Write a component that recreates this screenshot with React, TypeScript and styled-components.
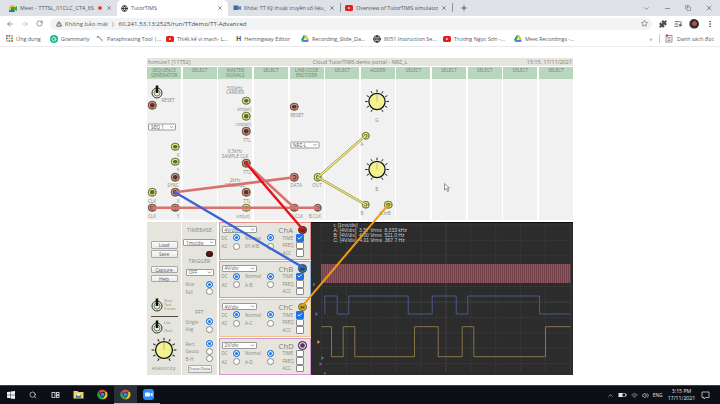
import React from "react";
import styled, { createGlobalStyle } from "styled-components";
import {
  ArrowLeft,
  ArrowRight,
  Check,
  ChevronDown,
  ChevronUp,
  Copy,
  Globe,
  ListMusic,
  Minus,
  MoreVertical,
  Plus,
  Puzzle,
  RotateCw,
  Search,
  Star,
  TriangleAlert,
  Volume2,
  Wifi,
  X,
} from "lucide-react";

const GlobalStyle = createGlobalStyle`
  html, body {
    margin: 0;
    width: 720px;
    height: 404px;
    overflow: hidden;
    background: #fff;
    font-family: "Open Sans", "Liberation Sans", sans-serif;
  }
  * { box-sizing: border-box; }
`;

// page position of the rack, the wires and the labels are read off the screenshot in page pixels
const RACK_X = 147;
const RACK_Y = 67;

const Screen = styled.div`
  width: 720px;
  height: 404px;
  display: flex;
  flex-direction: column;
`;

/* ---------- browser chrome ---------- */

const TabStrip = styled.div`
  height: 16px;
  background: #dee1e6;
  display: flex;
  align-items: stretch;
  color: #50545a;
`;

const Tab = styled.div<{ $w: number; $active?: boolean; $pad?: number }>`
  width: ${({ $w }) => $w}px;
  display: flex;
  align-items: center;
  gap: 3px;
  padding: 0 5px 0 ${({ $pad }) => $pad ?? 5}px;
  background: ${({ $active }) => ($active ? "#fff" : "transparent")};
  border-radius: 5px 5px 0 0;
  font-size: 5.4px;
  white-space: nowrap;
  svg { flex: none; }
`;

const TabTitle = styled.span<{ $track?: number }>`
  flex: 1;
  overflow: hidden;
  text-overflow: clip;
  letter-spacing: ${({ $track }) => $track ?? 0}px;
`;

const TabDivider = styled.div`
  width: 1px;
  height: 9px;
  margin: 3px 0;
  background: #8f9397;
`;

const NewTab = styled.div`
  width: 22px;
  display: flex;
  align-items: center;
  justify-content: center;
  color: #43474c;
`;

const WindowControls = styled.div`
  margin-left: auto;
  display: flex;
  align-items: center;
  gap: 14px;
  padding-right: 7px;
  color: #55595e;
`;

const Toolbar = styled.div`
  height: 15px;
  background: #fff;
  display: flex;
  align-items: center;
  padding: 0 6px 0 6px;
  color: #6a6e73;
`;

const NavIcons = styled.div`
  display: flex;
  align-items: center;
  gap: 7px;
  width: 44px;
`;

const Omnibox = styled.div`
  width: 604px;
  height: 12px;
  background: #f1f3f4;
  border-radius: 6px;
  display: flex;
  align-items: center;
  gap: 3px;
  padding: 0 4px 0 6px;
  font-size: 6.1px;
  color: #5f6368;
`;

const Url = styled.span`
  color: #4a4d51;
  margin-left: 1px;
`;

const ToolIcons = styled.div`
  display: flex;
  align-items: center;
  gap: 7px;
  margin-left: 7px;
  color: #45494e;
`;

const Avatar = styled.div`
  width: 10px;
  height: 10px;
  border-radius: 50%;
  background: radial-gradient(circle at 55% 45%, #a8553f 0 28%, #3b2b2c 30% 62%, #7d8a8e 64%);
`;

const BookmarkBar = styled.div`
  height: 16px;
  background: #fff;
  border-bottom: 1px solid #e8eaed;
  display: flex;
  align-items: center;
  padding-left: 6px;
  font-size: 5.4px;
  color: #55595e;
`;

const Bookmark = styled.div<{ $w: number }>`
  width: ${({ $w }) => $w}px;
  display: flex;
  align-items: center;
  gap: 3px;
  white-space: nowrap;
  overflow: hidden;
  svg { flex: none; }
`;

const BookmarkLetter = styled.b`
  font-size: 7px;
`;

const BookmarkEnd = styled.div`
  margin-left: auto;
  display: flex;
  align-items: center;
  gap: 4px;
  padding-right: 6px;
`;

const BarDivider = styled.div`
  width: 1px;
  height: 9px;
  background: #c8cacd;
  margin: 0 1px 0 3px;
`;

const OmniboxEnd = styled.span`
  margin-left: auto;
  display: flex;
`;

/* ---------- portal ---------- */

const Page = styled.div`
  flex: 1;
  background: #fff;
  padding: 11px 0 0 147px;
`;

const Portal = styled.div`
  position: relative;
  width: 426px;
  color: #8a8f8a;
`;

const TitleBar = styled.div`
  height: 8px;
  margin-bottom: 1px;
  padding: 0 1px;
  background: #e5e5dd;
  display: grid;
  grid-template-columns: 1fr auto 1fr;
  align-items: center;
  font-size: 5.2px;
  letter-spacing: 0.1px;
  color: #7b7e78;
`;

const TitleRight = styled.span`
  text-align: right;
`;

const Rack = styled.div`
  position: relative;
  height: 153px;
  display: grid;
  grid-template-columns: repeat(12, 1fr);
  column-gap: 1.6px;
  margin-bottom: 2px;
`;

const ModuleColumn = styled.div`
  display: flex;
  flex-direction: column;
  background: #f1f1f1;
`;

const ColumnHead = styled.div`
  height: 12px;
  padding-top: 1px;
  background: #b8d5bd;
  font-size: 4.6px;
  line-height: 5.2px;
  text-align: center;
  color: #73877a;
`;

const Node = styled.div<{ $x: number; $y: number }>`
  position: absolute;
  left: ${({ $x }) => $x - RACK_X}px;
  top: ${({ $y }) => $y - RACK_Y}px;
  transform: translate(-50%, -50%);
`;

const NodeLabel = styled(Node)`
  font-size: 4.6px;
  line-height: 4.8px;
  text-align: center;
  white-space: nowrap;
  color: #858985;
`;

const SOCKET = {
  brown: { rim: "#7d5a48", ring: "#c09a86", core: "#5e2f28" },
  green: { rim: "#76863a", ring: "#dfe79a", core: "#5f6b2a" },
  red: { rim: "#6e2b22", ring: "#a5342b", core: "#4f1510" },
  blue: { rim: "#2a4d74", ring: "#3f7ab2", core: "#1d3d5e" },
  orange: { rim: "#8b7628", ring: "#d9b53a", core: "#6e5a1a" },
  purple: { rim: "#4e2a5a", ring: "#e6d9ea", core: "#5c2f6b" },
};

const SocketDot = styled.span<{ $kind: keyof typeof SOCKET }>`
  display: block;
  flex: none;
  width: 8.5px;
  height: 8.5px;
  border-radius: 50%;
  background: ${({ $kind }) => SOCKET[$kind].core};
  border: 1.5px solid ${({ $kind }) => SOCKET[$kind].rim};
  box-shadow: inset 0 0 0 1.2px ${({ $kind }) => SOCKET[$kind].ring};
`;

const Dropdown = styled.div<{ $w: number; $h?: number }>`
  width: ${({ $w }) => $w}px;
  height: ${({ $h }) => $h ?? 7}px;
  background: #fff;
  border: 0.6px solid #9a9a9a;
  border-radius: 1px;
  display: flex;
  align-items: center;
  justify-content: space-between;
  padding: 0 1px 0 2px;
  font-size: 4.8px;
  color: #555;
  white-space: nowrap;
`;

/* ---------- console ---------- */

const Console = styled.div`
  height: 153px;
  display: flex;
`;

const SidePanel = styled.div`
  width: 34px;
  margin-right: 1px;
  background: #e5e5dd;
  padding-top: 19px;
  display: flex;
  flex-direction: column;
  align-items: center;
`;

const ActionGroup = styled.div`
  display: flex;
  flex-direction: column;
  gap: 1.5px;
  margin-bottom: 8px;
`;

const ActionButton = styled.div<{ $w?: number }>`
  width: ${({ $w }) => $w ?? 27}px;
  height: 7.5px;
  background: linear-gradient(#fafafa, #e9e9e9);
  border: 0.6px solid #a9a9a9;
  border-radius: 1px;
  font-size: 4.6px;
  line-height: 6.2px;
  text-align: center;
  color: #555;
`;

const ModeRow = styled.div<{ $mt: number }>`
  width: 100%;
  margin-top: ${({ $mt }) => $mt}px;
  display: flex;
  align-items: center;
  gap: 1px;
  padding-left: 4px;
`;

const ModeText = styled.div`
  font-size: 3.8px;
  line-height: 4px;
  color: #8a8a84;
`;

const Rule = styled.div`
  width: 27px;
  height: 1px;
  margin-top: 4px;
  background: #4c4c48;
`;

const KnobSlot = styled.div`
  margin-top: 3px;
  height: 26px;
`;

const KnobCaption = styled.div`
  margin-top: 0.5px;
  font-size: 5.4px;
  letter-spacing: 0.2px;
  color: #8d908a;
`;

const ControlPanel = styled.div`
  width: 35px;
  margin-right: 1.5px;
  background: #e5e5dd;
  padding: 5px 0 0;
  display: flex;
  flex-direction: column;
  align-items: center;
`;

const ControlTitle = styled.div<{ $mt: number }>`
  margin-top: ${({ $mt }) => $mt}px;
  height: 6px;
  font-size: 5.2px;
  line-height: 6px;
  letter-spacing: 0.1px;
  color: #85887f;
`;

const ControlDrop = styled.div<{ $mt: number }>`
  margin-top: ${({ $mt }) => $mt}px;
`;

const Led = styled.div`
  align-self: flex-end;
  width: 6.5px;
  height: 6.5px;
  margin: 4.7px 4.5px 0 0;
  border-radius: 50%;
  background: radial-gradient(circle at 50% 45%, #7a1c18, #2a0b0a 70%);
`;

const OptionGroup = styled.div<{ $mt: number }>`
  width: 100%;
  margin-top: ${({ $mt }) => $mt}px;
  padding: 0 4.5px 0 3.5px;
  display: flex;
  flex-direction: column;
  gap: 0.5px;
`;

const OptionRow = styled.div`
  height: 7.2px;
  display: flex;
  align-items: center;
  justify-content: space-between;
  font-size: 4.6px;
  color: #8a8d86;
`;

const TraceButton = styled(ActionButton)`
  margin-top: 2.5px;
  font-size: 4.2px;
`;

const Radio = styled.span<{ $on?: boolean }>`
  flex: none;
  width: 7px;
  height: 7px;
  border-radius: 50%;
  background: ${({ $on }) => ($on ? "#1a73e8" : "#fff")};
  border: 0.8px solid ${({ $on }) => ($on ? "#1a73e8" : "#8a8a8a")};
  box-shadow: ${({ $on }) => ($on ? "inset 0 0 0 1px #fff" : "none")};
`;

const Tick = styled.span<{ $on?: boolean }>`
  flex: none;
  width: 7.5px;
  height: 7.5px;
  border-radius: 1px;
  background: ${({ $on }) => ($on ? "#1a73e8" : "#fff")};
  border: 0.7px solid ${({ $on }) => ($on ? "#1a73e8" : "#8a8a8a")};
  display: flex;
  align-items: center;
  justify-content: center;
  color: #fff;
`;

const ChannelStack = styled.div`
  width: 92.5px;
  display: flex;
  flex-direction: column;
  gap: 1px;
`;

const ChannelCard = styled.div<{ $edge: string }>`
  flex: 1;
  background: #e5e5dd;
  border: 1px solid ${({ $edge }) => $edge};
  padding: 3px 6.5px 0 2px;
  display: flex;
  justify-content: space-between;
`;

const ChannelLeft = styled.div`
  display: flex;
  flex-direction: column;
  gap: 1px;
`;

const RadioRow = styled.div`
  display: grid;
  grid-template-columns: 11px 7.5px 27px 7.5px;
  height: 7.5px;
  align-items: center;
  font-size: 4.6px;
  color: #85887f;
  span:nth-child(3) { padding-left: 5px; white-space: nowrap; }
`;

const ChannelRight = styled.div`
  width: 25px;
  display: flex;
  flex-direction: column;
`;

const ChannelHeader = styled.div`
  height: 8px;
  display: flex;
  align-items: center;
  justify-content: space-between;
  font-size: 7.6px;
  letter-spacing: 0.2px;
  color: #7c7f78;
  ${SocketDot} { margin-right: -3px; }
`;

const ChannelFlag = styled.div`
  height: 7.6px;
  padding-left: 4px;
  display: flex;
  align-items: center;
  justify-content: space-between;
  font-size: 4.6px;
  color: #85887f;
`;

const ScopePanel = styled.div`
  position: relative;
  flex: 1;
  padding-left: 1.5px;
  background: #2c2c2c;
  border-top: 1px solid #111;
`;

const ScopeSvg = styled.svg`
  display: block;
`;

const Readout = styled.div`
  position: absolute;
  left: 22.5px;
  top: 0;
  font-family: "Liberation Sans", sans-serif;
  font-size: 5px;
  line-height: 5px;
  color: #d0d0d0;
  white-space: pre;
`;

const WireLayer = styled.svg`
  position: absolute;
  left: 0;
  top: 0;
  pointer-events: none;
`;

/* ---------- taskbar ---------- */

const Taskbar = styled.div`
  height: 19px;
  background: #0c1016;
  border-top: 1px solid #3e4146;
  display: flex;
  align-items: stretch;
  color: #e6e6e6;
`;

const TaskSlot = styled.div<{ $w: number; $active?: boolean; $running?: boolean }>`
  width: ${({ $w }) => $w}px;
  display: flex;
  align-items: center;
  justify-content: center;
  background: ${({ $active }) => ($active ? "#2b3036" : "transparent")};
  border-bottom: 1px solid ${({ $running }) => ($running ? "#8cc6ec" : "transparent")};
`;

const Tray = styled.div`
  margin-left: auto;
  display: flex;
  align-items: center;
  gap: 4px;
  padding-right: 10.5px;
  font-size: 4.8px;
`;

const Clock = styled.div`
  width: 30px;
  text-align: center;
  line-height: 7px;
  font-size: 5.2px;
`;

/* ---------- little drawings ---------- */

const ChromeLogo = ({ size = 8 }: { size?: number }) => (
  <svg width={size} height={size} viewBox="0 0 24 24">
    <path d="M12 1a11 11 0 0 1 9.5 5.5H12A5.5 5.5 0 0 0 7 9.7L3.3 5A11 11 0 0 1 12 1z" fill="#e0453a" />
    <path d="M21.5 6.5A11 11 0 0 1 12 23l4.7-8.2A5.5 5.5 0 0 0 16 7z" fill="#f6c21c" />
    <path d="M3.3 5A11 11 0 0 0 12 23l4.7-8.2a5.5 5.5 0 0 1-9.5-.1z" fill="#2fa350" />
    <circle cx="12" cy="12" r="4.5" fill="#3c7de6" />
  </svg>
);

const YoutubeIcon = () => (
  <svg width="8" height="6" viewBox="0 0 16 12">
    <rect width="16" height="12" rx="3" fill="#e3211c" />
    <path d="M6.5 3.5v5l4-2.5z" fill="#fff" />
  </svg>
);

const DriveIcon = () => (
  <svg width="8" height="7" viewBox="0 0 16 14">
    <path d="M5.5 0h5L16 9.5h-5z" fill="#f6c21c" />
    <path d="M5.5 0 0 9.5 2.5 14 8 4.5z" fill="#1fa463" />
    <path d="M5 9.5h11L13.5 14h-11z" fill="#4285f4" />
  </svg>
);

const GrammarlyIcon = () => (
  <svg width="8" height="8" viewBox="0 0 16 16">
    <circle cx="8" cy="8" r="8" fill="#15b48a" />
    <path d="M11 5.5A4 4 0 1 0 12 8H8.5" fill="none" stroke="#fff" strokeWidth="1.8" />
  </svg>
);

const PenIcon = () => (
  <svg width="8" height="8" viewBox="0 0 16 16">
    <path d="M2 2l9 9 3 3-1-4-8-8z" fill="#9a9a9a" />
    <path d="M1 5l3-3 1 1-3 3z" fill="#555" />
  </svg>
);

const AppsIcon = () => (
  <svg width="7" height="7" viewBox="0 0 9 9">
    {[0, 3.3, 6.6].flatMap((y, r) =>
      [0, 3.3, 6.6].map((x, c) => (
        <rect key={`${r}${c}`} x={x} y={y} width="2.2" height="2.2" fill={["#e0453a", "#2a7de1", "#f6a81c", "#2fa350"][(r + c) % 4]} />
      )),
    )}
  </svg>
);

const MeetIcon = () => (
  <svg width="8" height="7" viewBox="0 0 16 14">
    <path d="M0 4l4-4h7v4H4v6H0z" fill="#f6c21c" />
    <path d="M0 10h4v4H1a1 1 0 0 1-1-1z" fill="#2a7de1" />
    <path d="M4 4h7v10H4z" fill="#2fa350" />
    <path d="M11 5l5-3v10l-5-3z" fill="#2fa350" />
    <path d="M4 10h7v4H4z" fill="#1e8e3e" />
  </svg>
);

const LessonIcon = () => (
  <svg width="8" height="6" viewBox="0 0 16 12">
    <rect x="1" y="1" width="10" height="9" rx="1" fill="#3a6ea5" />
    <path d="M11 4l5-2v8l-5-2z" fill="#4d86bf" />
  </svg>
);

const WindowsIcon = () => (
  <svg width="8" height="8" viewBox="0 0 16 16" fill="#f2f2f2">
    <path d="M0 2.2 6.6 1.3v6.2H0zM7.4 1.2 16 0v7.5H7.4zM0 8.4h6.6v6.2L0 13.7zM7.4 8.4H16V16l-8.6-1.2z" />
  </svg>
);

const TaskViewIcon = () => (
  <svg width="9" height="8" viewBox="0 0 18 16" fill="none" stroke="#e6e6e6" strokeWidth="1.6">
    <rect x="2" y="3" width="6" height="10" />
    <rect x="11" y="3" width="5" height="4" />
    <rect x="11" y="9" width="5" height="4" />
  </svg>
);

const FolderIcon = () => (
  <svg width="11" height="9" viewBox="0 0 22 18">
    <path d="M1 2h8l2 2h10v13H1z" fill="#f2cf6a" />
    <rect x="6" y="10" width="10" height="6" fill="#2f8fd6" />
    <rect x="8" y="8" width="6" height="3" fill="#fff" />
  </svg>
);

const ZoomIcon = () => (
  <svg width="11" height="11" viewBox="0 0 22 22">
    <rect width="22" height="22" rx="6" fill="#2d8cff" />
    <rect x="4" y="7" width="10" height="8" rx="2" fill="#fff" />
    <path d="M15 10l4-3v8l-4-3z" fill="#fff" />
  </svg>
);

const BatteryIcon = () => (
  <svg width="9" height="6" viewBox="0 0 18 12">
    <rect x="1" y="2" width="14" height="8" fill="#e6e6e6" />
    <rect x="15" y="4" width="2" height="4" fill="#e6e6e6" />
    <rect x="9" y="3" width="5" height="6" fill="#0c1016" />
  </svg>
);

const ReadingIcon = () => (
  <svg width="8" height="9" viewBox="0 0 16 18" fill="none" stroke="#666" strokeWidth="1.3">
    <rect x="2" y="3" width="12" height="13" />
    <path d="M5 7h6M5 10h6M5 13h6" />
    <path d="M2 1h4v5l-2-1.5L2 6z" fill="#d8322a" stroke="none" />
  </svg>
);

const PUSH_SWITCH = (
  <svg width="12" height="14" viewBox="0 0 24 28">
    <circle cx="12" cy="16" r="10" fill="#e8efdc" stroke="#2c3a2c" strokeWidth="2" />
    <circle cx="12" cy="16" r="6" fill="none" stroke="#47604a" strokeWidth="1.5" />
    <rect x="9.5" y="1" width="5" height="15" fill="#111" />
  </svg>
);

const Knob = ({ size }: { size: number }) => {
  const ticks = Array.from({ length: 11 }, (_, i) => -150 + i * 30);
  return (
    <svg width={size} height={size} viewBox="0 0 40 40">
      {ticks.map((a) => {
        const r = (a * Math.PI) / 180;
        return (
          <line
            key={a}
            x1={20 + 15 * Math.sin(r)}
            y1={20 - 15 * Math.cos(r)}
            x2={20 + 19 * Math.sin(r)}
            y2={20 - 19 * Math.cos(r)}
            stroke="#222"
            strokeWidth="1.6"
          />
        );
      })}
      <circle cx="20" cy="20" r="13" fill="#f4f191" stroke="#111" strokeWidth="2" />
      <line x1="20" y1="20" x2="20" y2="9" stroke="#b7b58a" strokeWidth="1.4" />
    </svg>
  );
};

/* ---------- data ---------- */

const HEADERS = [
  "SEQUENCE\nGENERATOR",
  "SELECT",
  "MASTER\nSIGNALS",
  "SELECT",
  "LINE-CODE\nENCODER",
  "SELECT",
  "ADDER",
  "SELECT",
  "SELECT",
  "SELECT",
  "SELECT",
  "SELECT",
];

type SocketDef = [number, number, keyof typeof SOCKET];
const SOCKETS: SocketDef[] = [
  [152, 105, "brown"],
  [175, 146.7, "green"],
  [175, 161.7, "green"],
  [175, 177.3, "brown"],
  [152, 192.3, "green"],
  [175, 192.3, "brown"],
  [152, 207.7, "brown"],
  [175, 207.7, "brown"],
  [246, 100.7, "green"],
  [246, 116, "green"],
  [246, 131.3, "brown"],
  [246, 163.3, "brown"],
  [246, 192.3, "brown"],
  [246, 207.7, "green"],
  [294.3, 106.7, "brown"],
  [294.3, 177.3, "brown"],
  [317.7, 177.3, "green"],
  [294.3, 207.7, "brown"],
  [317.7, 207.7, "brown"],
  [365.7, 135.7, "green"],
  [365.7, 204.7, "green"],
  [388.3, 204.7, "green"],
];

const LABELS: [number, number, string][] = [
  [168, 100, "RESET"],
  [178, 154.5, "X"],
  [178, 169.5, "Y"],
  [173, 185, "SYNC"],
  [152, 200.5, "CLK"],
  [178, 200.5, "X"],
  [152, 216, "CLK"],
  [178, 216, "Y"],
  [235, 90.5, "500kHz\nCARRIER"],
  [244, 109, "sin(wt)"],
  [243, 124, "cos(wt)"],
  [247, 139.5, "TTL"],
  [235, 154, "8.3kHz\nSAMPLE CLK"],
  [247, 171.5, "TTL"],
  [235, 183, "2kHz\nMESSAGE"],
  [247, 200.5, "TTL"],
  [243, 216, "sin(ut)"],
  [297, 115, "RESET"],
  [296, 185, "DATA"],
  [317, 185, "OUT"],
  [297, 216, "A.CLK"],
  [315, 216, "B.CLK"],
  [376.7, 120, "G"],
  [362, 144, "A"],
  [376.7, 189, "B"],
  [362, 212.7, "B"],
  [385, 212.7, "G.InB"],
];

const CHANNELS = [
  { name: "ChA", edge: "#e88f8c", socket: "red", range: "4V/div", mode: "XY A/B", flags: [true, false, false] },
  { name: "ChB", edge: "#8fb2dc", socket: "blue", range: "4V/div", mode: "A-B", flags: [true, false, false] },
  { name: "ChC", edge: "#efc585", socket: "orange", range: "4V/div", mode: "A-C", flags: [true, false, false] },
  { name: "ChD", edge: "#d494d6", socket: "purple", range: "2V/div", mode: "A-D", flags: [false, false, false] },
] as const;

// scope trace edges, in scope pixels
const BLUE_EDGES = [11.8, 24.2, 35.8, 95.2, 119.2, 143.2, 154.8, 226.5];
const GOLD_EDGES = [18.5, 30.2, 41.8, 101.5, 125.2, 149.2, 160.8, 232.5];
const TRACE_END = 257.5;

const tracePath = (edges: number[], start: number, hi: number, lo: number, startHigh: boolean) => {
  let high = startHigh;
  let d = `M${start} ${high ? hi : lo}`;
  edges.forEach((x) => {
    d += `L${x} ${high ? hi : lo}`;
    high = !high;
    d += `L${x} ${high ? hi : lo}`;
  });
  return `${d}L${TRACE_END} ${high ? hi : lo}`;
};

const SCOPE_W = 260.5;
const SCOPE_H = 152;

const Scope = () => {
  const columns = Array.from({ length: 11 }, (_, i) => 8.5 + i * 24.9);
  const rows = Array.from({ length: 10 }, (_, i) => 2 + i * 15.4);
  const pulses = Array.from({ length: 125 }, (_, i) => 8.5 + i * 2);
  return (
    <ScopeSvg width={SCOPE_W} height={SCOPE_H} viewBox={`0 0 ${SCOPE_W} ${SCOPE_H}`}>
      {columns.map((x, i) => (
        <line key={x} x1={x} y1="0" x2={x} y2="150" stroke={i === 5 ? "#666" : "#474747"} strokeWidth="0.6" strokeDasharray="1.5 1" />
      ))}
      {rows.map((y, i) => (
        <line key={y} x1="8.5" y1={y} x2={TRACE_END} y2={y} stroke={i === 5 ? "#666" : "#474747"} strokeWidth="0.6" strokeDasharray="1.5 1" />
      ))}
      <rect x="8.5" y="41" width="249" height="19" fill="#74404a" />
      {pulses.map((x) => (
        <line key={x} x1={x} y1="41" x2={x} y2="60" stroke="#97545a" strokeWidth="0.9" />
      ))}
      <path d={tracePath(BLUE_EDGES, 11.8, 73, 91, false)} fill="none" stroke="#4d6096" strokeWidth="0.9" />
      <path d={tracePath(GOLD_EDGES, 8.5, 103.7, 133.7, true)} fill="none" stroke="#8f7e4c" strokeWidth="0.9" />
      <path d="M0 59.5l2.5 2-2.5 2z" fill="#a8485e" />
      <path d="M2.5 89l2.5 2-2.5 2z" fill="#5e72ad" />
      <path d="M4.5 117l2.5 2-2.5 2z" fill="#e0a83a" />
      <path d="M8.5 133l2.5 2-2.5 2z" fill="#3aa04a" />
      <path d="M6.5 139l2.5 2-2.5 2z" fill="#a048b0" />
      <path d="M11 149l2.5 2h-2.5z" fill="#3aa04a" />
    </ScopeSvg>
  );
};

const App = () => (
  <Screen>
    <GlobalStyle />

    <TabStrip>
      <Tab $w={117} $pad={9}>
        <MeetIcon />
        <TabTitle $track={0.15}>Meet - TTTSL_01CLC_CT4_8S</TabTitle>
        <svg width="6" height="6" viewBox="0 0 12 12">
          <circle cx="6" cy="6" r="5.5" fill="#f5c6c3" />
          <circle cx="6" cy="6" r="3.5" fill="#d8322a" />
        </svg>
        <X size={6} strokeWidth={2.5} />
      </Tab>
      <Tab $w={111} $active $pad={4}>
        <Globe size={7} color="#333" strokeWidth={3} />
        <TabTitle>TutorTIMS</TabTitle>
        <X size={6} strokeWidth={2.5} />
      </Tab>
      <Tab $w={112} $pad={5}>
        <LessonIcon />
        <TabTitle>Khóa: TT Kỹ thuật truyền số liệu_</TabTitle>
        <X size={6} strokeWidth={2.5} />
      </Tab>
      <TabDivider />
      <Tab $w={111} $pad={4}>
        <YoutubeIcon />
        <TabTitle>Overview of TutorTIMS simulator</TabTitle>
        <X size={6} strokeWidth={2.5} />
      </Tab>
      <TabDivider />
      <NewTab>
        <Plus size={8} strokeWidth={2.5} />
      </NewTab>
      <WindowControls>
        <ChevronDown size={7} />
        <Minus size={7} />
        <Copy size={6} strokeWidth={2} />
        <X size={8} />
      </WindowControls>
    </TabStrip>

    <Toolbar>
      <NavIcons>
        <ArrowLeft size={8} strokeWidth={2.2} />
        <ArrowRight size={8} strokeWidth={2.2} color="#b5b7ba" />
        <RotateCw size={7} strokeWidth={2.4} />
      </NavIcons>
      <Omnibox>
        <TriangleAlert size={6} strokeWidth={3} color="#444" />
        <span>Không bảo mật</span>
        <span>|</span>
        <Url>60.241.53.13:2525/run/TTdemo/TT-Advanced</Url>
        <OmniboxEnd>
          <Star size={7} strokeWidth={2} color="#555" />
        </OmniboxEnd>
      </Omnibox>
      <ToolIcons>
        <Puzzle size={8} fill="#45494e" />
        <ListMusic size={8} strokeWidth={2.4} />
        <Avatar />
        <MoreVertical size={8} strokeWidth={2.5} />
      </ToolIcons>
    </Toolbar>

    <BookmarkBar>
      <Bookmark $w={44}><AppsIcon /><span>Ứng dụng</span></Bookmark>
      <Bookmark $w={46}><GrammarlyIcon /><span>Grammarly</span></Bookmark>
      <Bookmark $w={70}><PenIcon /><span>Paraphrasing Tool |...</span></Bookmark>
      <Bookmark $w={70}><YoutubeIcon /><span>Thiết kế vi mạch- L...</span></Bookmark>
      <Bookmark $w={65}><BookmarkLetter>H</BookmarkLetter><span>Hemingway Editor</span></Bookmark>
      <Bookmark $w={72}><DriveIcon /><span>Recording_Slide_Da...</span></Bookmark>
      <Bookmark $w={70}><Globe size={8} color="#333" strokeWidth={3} /><span>8051 Instruction Se...</span></Bookmark>
      <Bookmark $w={71}><YoutubeIcon /><span>Trương Ngọc Sơn -...</span></Bookmark>
      <Bookmark $w={62}><DriveIcon /><span>Meet Recordings -...</span></Bookmark>
      <BookmarkEnd>
        <span>»</span>
        <BarDivider />
        <ReadingIcon />
        <span>Danh sách đọc</span>
      </BookmarkEnd>
    </BookmarkBar>

    <Page>
      <Portal>
        <TitleBar>
          <span>hcmute1 [11752]</span>
          <span>Cloud TutorTIMS demo portal - NRZ_L</span>
          <TitleRight>15:15, 17/11/2021</TitleRight>
        </TitleBar>

        <Rack>
          {HEADERS.map((head, i) => (
            <ModuleColumn key={i}>
              <ColumnHead>
                {head.split("\n").map((line) => (
                  <div key={line}>{line}</div>
                ))}
              </ColumnHead>
            </ModuleColumn>
          ))}

          <Node $x={156.7} $y={92.5}>{PUSH_SWITCH}</Node>
          <Node $x={162} $y={126.5}>
            <Dropdown $w={28}>SEQ 1<ChevronDown size={5} strokeWidth={3} /></Dropdown>
          </Node>
          <Node $x={304.5} $y={144.5}>
            <Dropdown $w={29}>NRZ-L<ChevronDown size={5} strokeWidth={3} /></Dropdown>
          </Node>
          <Node $x={376.7} $y={104}><Knob size={25} /></Node>
          <Node $x={376.7} $y={172.3}><Knob size={25} /></Node>

          {SOCKETS.map(([x, y, kind]) => (
            <Node key={`${x}-${y}`} $x={x} $y={y}>
              <SocketDot $kind={kind} />
            </Node>
          ))}
          {LABELS.map(([x, y, text]) => (
            <NodeLabel key={`${x}-${y}`} $x={x} $y={y}>
              {text.split("\n").map((line) => (
                <div key={line}>{line}</div>
              ))}
            </NodeLabel>
          ))}

          <Node $x={447} $y={185.5}>
            <svg width="6" height="9" viewBox="0 0 12 18">
              <path d="M1 1v13l3.5-3 2.5 6 2.5-1-2.5-6H11z" fill="#fff" stroke="#555" strokeWidth="1.2" />
            </svg>
          </Node>
        </Rack>

        <Console>
          <SidePanel>
            <ActionGroup>
              <ActionButton>Load</ActionButton>
              <ActionButton>Save</ActionButton>
            </ActionGroup>
            <ActionGroup>
              <ActionButton>Capture</ActionButton>
              <ActionButton>Help</ActionButton>
            </ActionGroup>
            <ModeRow $mt={8}>
              {PUSH_SWITCH}
              <ModeText>Slow<br />Test<br />Freeze</ModeText>
            </ModeRow>
            <Rule />
            <ModeRow $mt={3}>
              {PUSH_SWITCH}
              <ModeText>Lite<br /><br />Dark</ModeText>
            </ModeRow>
            <KnobSlot><Knob size={26} /></KnobSlot>
            <KnobCaption>elasticity</KnobCaption>
          </SidePanel>

          <ControlPanel>
            <ControlTitle $mt={0}>TIMEBASE</ControlTitle>
            <ControlDrop $mt={6}>
              <Dropdown $w={33}>1ms/div<ChevronDown size={5} strokeWidth={3} /></Dropdown>
            </ControlDrop>
            <Led />
            <ControlTitle $mt={1}>TRIGGER</ControlTitle>
            <ControlDrop $mt={5}>
              <Dropdown $w={28} $h={6.5}>OFF<ChevronDown size={5} strokeWidth={3} /></Dropdown>
            </ControlDrop>
            <OptionGroup $mt={5}>
              <OptionRow>Rise<Radio $on /></OptionRow>
              <OptionRow>Fall<Radio /></OptionRow>
            </OptionGroup>
            <ControlTitle $mt={13}>FFT</ControlTitle>
            <OptionGroup $mt={3.5}>
              <OptionRow>Single<Radio $on /></OptionRow>
              <OptionRow>Avg<Radio /></OptionRow>
            </OptionGroup>
            <OptionGroup $mt={7}>
              <OptionRow>Rect<Radio $on /></OptionRow>
              <OptionRow>Gauss<Radio /></OptionRow>
              <OptionRow>B-H<Radio /></OptionRow>
            </OptionGroup>
            <TraceButton $w={24}>Trace Data</TraceButton>
          </ControlPanel>

          <ChannelStack>
            {CHANNELS.map((ch) => (
              <ChannelCard key={ch.name} $edge={ch.edge}>
                <ChannelLeft>
                  <Dropdown $w={35}>{ch.range}<ChevronDown size={5} strokeWidth={3} /></Dropdown>
                  <RadioRow>
                    <span>DC</span>
                    <Radio $on />
                    <span>Normal</span>
                    <Radio $on />
                  </RadioRow>
                  <RadioRow>
                    <span>AC</span>
                    <Radio />
                    <span>{ch.mode}</span>
                    <Radio />
                  </RadioRow>
                </ChannelLeft>
                <ChannelRight>
                  <ChannelHeader>
                    {ch.name}
                    <SocketDot $kind={ch.socket} />
                  </ChannelHeader>
                  {["TIME", "FREQ", "ACC"].map((flag, i) => (
                    <ChannelFlag key={flag}>
                      <span>{flag}</span>
                      <Tick $on={ch.flags[i]}>
                        {ch.flags[i] && <Check size={6} strokeWidth={4} />}
                      </Tick>
                    </ChannelFlag>
                  ))}
                </ChannelRight>
              </ChannelCard>
            ))}
          </ChannelStack>

          <ScopePanel>
            <Scope />
            <Readout>
              {"t: [1ms/div]\nA: [4V/div]  3.57 Vrms  8.333 kHz\nB: [4V/div]  4.00 Vrms  521.0 Hz\nC: [4V/div]  4.01 Vrms  367.7 Hz"}
            </Readout>
          </ScopePanel>
        </Console>

        <WireLayer width="426" height="317" viewBox="147 58 426 317">
          <g fill="none" strokeLinecap="round">
            <line x1="152" y1="207.7" x2="317.7" y2="207.7" stroke="#d9726f" strokeWidth="2.6" />
            <line x1="175" y1="192.3" x2="294.3" y2="177.3" stroke="#d9726f" strokeWidth="2.6" />
            <line x1="246" y1="163.3" x2="294.3" y2="207.7" stroke="#d9726f" strokeWidth="2.6" />
            <line x1="246" y1="163.3" x2="302.7" y2="229.3" stroke="#e3131a" strokeWidth="2.4" />
            <line x1="175" y1="192.3" x2="302.7" y2="267.3" stroke="#3b63d6" strokeWidth="2.4" />
            <line x1="317.7" y1="177.3" x2="365.7" y2="135.7" stroke="#8f8a2e" strokeWidth="2.4" />
            <line x1="317.7" y1="177.3" x2="365.7" y2="135.7" stroke="#f3ec86" strokeWidth="1.3" />
            <line x1="317.7" y1="177.3" x2="365.7" y2="204.7" stroke="#8f8a2e" strokeWidth="2.4" />
            <line x1="317.7" y1="177.3" x2="365.7" y2="204.7" stroke="#f3ec86" strokeWidth="1.3" />
            <line x1="388.3" y1="204.7" x2="302.7" y2="305.7" stroke="#f09c12" strokeWidth="2" />
          </g>
        </WireLayer>
      </Portal>
    </Page>

    <Taskbar>
      <TaskSlot $w={22}><WindowsIcon /></TaskSlot>
      <TaskSlot $w={22}><Search size={8} /></TaskSlot>
      <TaskSlot $w={23}><TaskViewIcon /></TaskSlot>
      <TaskSlot $w={23}><FolderIcon /></TaskSlot>
      <TaskSlot $w={24}><ChromeLogo size={11} /></TaskSlot>
      <TaskSlot $w={23} $active $running><ChromeLogo size={11} /></TaskSlot>
      <TaskSlot $w={23} $running><ZoomIcon /></TaskSlot>
      <Tray>
        <ChevronUp size={7} />
        <BatteryIcon />
        <Wifi size={7} color="#aaa" />
        <Volume2 size={7} />
        <span>ENG</span>
        <Clock>3:15 PM<br />17/11/2021</Clock>
        <svg width="9" height="9" viewBox="0 0 18 18" fill="none" stroke="#e6e6e6" strokeWidth="1.4">
          <path d="M2 2h14v11H9l-3 3v-3H2z" />
        </svg>
      </Tray>
    </Taskbar>
  </Screen>
);

export default App;
